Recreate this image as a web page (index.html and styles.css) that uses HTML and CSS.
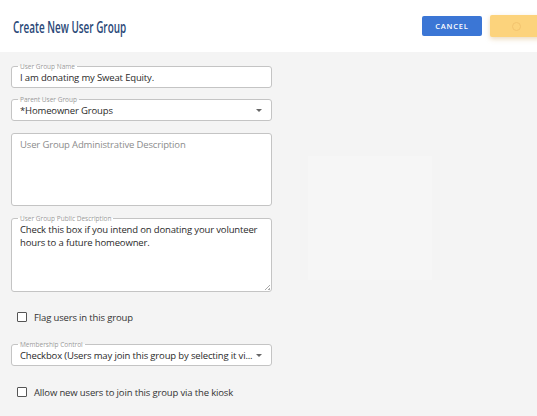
FILE: index.html
```html
<!DOCTYPE html>
<html lang="en">

<head>
    <meta charset="UTF-8">
    <meta name="viewport" content="width=device-width, initial-scale=1.0">
    <title>Create New User Group</title>
    <link rel="stylesheet" href="styles.css">
</head>

<body>

    <!-- Cabeçalho -->
    <header class="topbar">
        <h1>Create New User Group</h1>
        <div class="actions">
            <button type="button" class="btn-cancel">CANCEL</button>
            <button type="button" class="btn-save"><span class="spinner"></span></button>
        </div>
    </header>

    <main class="content">
        <form class="group-form">
            <div class="field">
                <span class="label">User Group Name</span>
                <div class="value">I am donating my Sweat Equity.</div>
            </div>

            <div class="field select">
                <span class="label">Parent User Group</span>
                <div class="value">*Homeowner Groups</div>
                <span class="caret"></span>
            </div>

            <div class="field area empty">
                <div class="placeholder">User Group Administrative Description</div>
            </div>

            <div class="field area">
                <span class="label">User Group Public Description</span>
                <div class="value">Check this box if you intend on donating your volunteer hours to a future homeowner.</div>
                <span class="grip"></span>
            </div>

            <label class="check">
                <span class="box"></span>
                Flag users in this group
            </label>

            <div class="field select">
                <span class="label">Membership Control</span>
                <div class="value">Checkbox (Users may join this group by selecting it vi...</div>
                <span class="caret"></span>
            </div>

            <label class="check last">
                <span class="box"></span>
                Allow new users to join this group via the kiosk
            </label>
        </form>

        <div class="ghost"></div>
    </main>

</body>

</html>
```

FILE: styles.css
```css
* {
    margin: 0;
    padding: 0;
    box-sizing: border-box;
}

body {
    font-family: "Open Sans", "Liberation Sans", sans-serif;
    background: #f4f4f4;
    color: #333;
    height: 416px;
    overflow: hidden;
}

/* Cabeçalho */
.topbar {
    height: 52px;
    background: #fff;
    display: flex;
    align-items: center;
    justify-content: space-between;
    padding-left: 13px;
}

.topbar h1 {
    font-weight: 600;
    font-size: 16px;
    color: #2a4878;
    white-space: nowrap;
    transform: scaleX(0.62);
    transform-origin: left center;
    margin-top: 1px;
}

.actions {
    display: flex;
    align-items: center;
    gap: 8px;
    margin-right: -4px;
}

.btn-cancel {
    width: 60px;
    height: 20px;
    background: #3b76d5;
    color: #fff;
    border: none;
    border-radius: 2px;
    font-family: "Open Sans", sans-serif;
    font-size: 7.5px;
    letter-spacing: 0.8px;
    font-weight: 600;
}

.btn-save {
    width: 51px;
    height: 22px;
    background: #fcd37c;
    border: none;
    border-radius: 2px 0 0 2px;
    box-shadow: 0 2px 5px rgba(200, 150, 60, 0.35);
    display: flex;
    align-items: center;
    justify-content: center;
}

.spinner {
    width: 9px;
    height: 9px;
    border: 1.5px solid #f3c46e;
    border-radius: 50%;
    margin-left: 2px;
}

/* Formulário */
.content {
    display: flex;
    padding: 14px 0 0 11px;
}

.group-form {
    width: 261px;
    display: flex;
    flex-direction: column;
}

.field {
    position: relative;
    background: #fff;
    border: 1px solid #c4c4c4;
    border-radius: 3px;
    height: 22px;
    padding: 0 8px;
    margin-bottom: 11px;
    display: flex;
    align-items: center;
}

.field.select {
    margin-bottom: 12px;
}

/* Rótulo sobre a borda */
.field .label {
    position: absolute;
    left: 6px;
    top: -4px;
    font-size: 6.5px;
    line-height: 7px;
    color: #9a9a9a;
    padding: 0 2px;
    background: linear-gradient(to bottom, #f4f4f4 50%, #fff 50%);
    white-space: nowrap;
}

.field .value {
    font-size: 9.5px;
    letter-spacing: -0.15px;
    color: #2a2a2a;
    line-height: 13px;
    white-space: nowrap;
    overflow: hidden;
    margin-top: 1px;
}

.field.select .value {
    padding-right: 18px;
}

.caret {
    position: absolute;
    right: 9px;
    top: 9px;
    border-left: 3px solid transparent;
    border-right: 3px solid transparent;
    border-top: 3px solid #666;
}

.field.area {
    height: 74px;
    align-items: flex-start;
    padding-top: 3px;
    margin-bottom: 12px;
}

.field.area .value {
    white-space: normal;
    padding-right: 4px;
}

.field.empty {
    height: 73px;
    padding-top: 4px;
    margin-bottom: 12px;
}

.placeholder {
    font-size: 9.5px;
    letter-spacing: -0.15px;
    color: #8c8c8c;
    line-height: 13px;
}

.grip {
    position: absolute;
    right: 1px;
    bottom: 1px;
    width: 5px;
    height: 5px;
    background: linear-gradient(135deg, transparent 45%, #aaa 45%, #aaa 55%, transparent 55%, transparent 75%, #aaa 75%);
}

.check {
    display: flex;
    align-items: center;
    gap: 7px;
    font-size: 9.5px;
    letter-spacing: -0.15px;
    color: #333;
    padding-left: 6px;
    height: 20px;
    margin: 3px 0 17px;
}

.check.last {
    margin-top: 4px;
}

.check .box {
    width: 10px;
    height: 10px;
    border: 1px solid #555;
    border-radius: 1px;
    background: #fff;
}

/* Painel claro ao fundo */
.ghost {
    width: 124px;
    height: 124px;
    margin: 90px 0 0 36px;
    background: #f6f6f6;
}
```
